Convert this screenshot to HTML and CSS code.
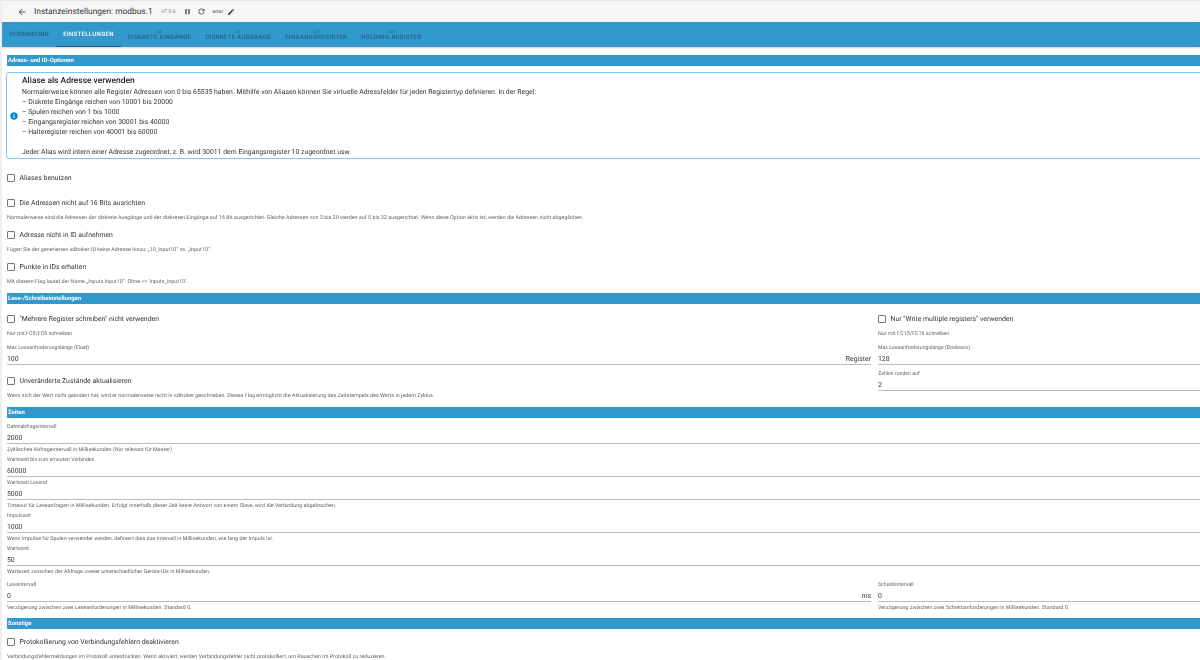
FILE: index.html
```html
<!DOCTYPE html>
<html lang="de">
<head>
<meta charset="utf-8">
<title>Instanzeinstellungen: modbus.1</title>
<link rel="stylesheet" href="styles.css">
</head>
<body>
<div class="page">
  <header class="topbar">
    <svg class="ico back" viewBox="0 0 24 24"><path d="M20 11H7.83l5.59-5.59L12 4l-8 8 8 8 1.41-1.41L7.83 13H20z"/></svg>
    <span class="title">Instanzeinstellungen: modbus.1</span>
    <span class="version">v7.0.6</span>
    <svg class="ico pause" viewBox="0 0 24 24"><path d="M6 19h4V5H6zm8-14v14h4V5z"/></svg>
    <svg class="ico reload" viewBox="0 0 24 24"><path d="M17.65 6.35A7.96 7.96 0 0 0 12 4a8 8 0 1 0 7.73 10h-2.08A6 6 0 1 1 12 6c1.66 0 3.14.69 4.22 1.78L13 11h7V4z"/></svg>
    <span class="status">error</span>
    <svg class="ico pencil" viewBox="0 0 24 24"><path d="M3 17.25V21h3.75L17.81 9.94l-3.75-3.75zM20.71 7.04a1 1 0 0 0 0-1.41l-2.34-2.34a1 1 0 0 0-1.41 0l-1.83 1.83 3.75 3.75z"/></svg>
  </header>
  <nav class="tabs">
    <div class="tab"><span class="tab-label">Verbindung</span></div>
    <div class="tab active"><span class="tab-label">Einstellungen</span></div>
    <div class="tab"><span class="tab-count">03</span><span class="tab-label">Diskrete Eingänge</span></div>
    <div class="tab"><span class="tab-count">01</span><span class="tab-label">Diskrete Ausgänge</span></div>
    <div class="tab"><span class="tab-count">123</span><span class="tab-label">Eingangsregister</span></div>
    <div class="tab"><span class="tab-count">123</span><span class="tab-label">Holding-Register</span></div>
  </nav>
  <main class="content">
    <h2 class="bar first">Adress- und ID-Optionen</h2>
    <section class="info">
      <svg class="info-icon" viewBox="0 0 24 24"><path d="M12 1a11 11 0 1 0 0 22 11 11 0 0 0 0-22zm1.6 17h-3.2v-7.5h3.2zm0-9.5h-3.2V5.6h3.2z"/></svg>
      <div class="info-text">
        <h3 class="info-title">Aliase als Adresse verwenden</h3>
        <p>Normalerweise können alle Register Adressen von 0 bis 65535 haben. Mithilfe von Aliasen können Sie virtuelle Adressfelder für jeden Registertyp definieren. In der Regel:</p>
        <p>– Diskrete Eingänge reichen von 10001 bis 20000</p>
        <p>– Spulen reichen von 1 bis 1000</p>
        <p>– Eingangsregister reichen von 30001 bis 40000</p>
        <p>– Halteregister reichen von 40001 bis 60000</p>
        <p>&nbsp;</p>
        <p>Jeder Alias wird intern einer Adresse zugeordnet, z. B. wird 30011 dem Eingangsregister 10 zugeordnet usw.</p>
      </div>
    </section>

    <label class="check solo"><span class="box"></span>Aliases benutzen</label>
    <label class="check"><span class="box"></span>Die Adressen nicht auf 16 Bits ausrichten</label>
    <p class="help gap">Normalerweise sind die Adressen der diskrete Ausgänge und der diskreten Eingänge auf 16 Bit ausgerichtet. Gleiche Adressen von 3 bis 20 werden auf 0 bis 32 ausgerichtet. Wenn diese Option aktiv ist, werden die Adressen nicht abgeglichen.</p>
    <label class="check"><span class="box"></span>Adresse nicht in ID aufnehmen</label>
    <p class="help gap">Fügen Sie der generierten ioBroker-ID keine Adresse hinzu: „10_Input10“ vs. „Input10“.</p>
    <label class="check"><span class="box"></span>Punkte in IDs erhalten</label>
    <p class="help">Mit diesem Flag lautet der Name „Inputs.Input10“. Ohne =&gt; 'Inputs_Input10'.</p>

    <h2 class="bar">Lese-/Schreibeinstellungen</h2>
    <div class="cols">
      <div class="col">
        <label class="check"><span class="box"></span>"Mehrere Register schreiben" nicht verwenden</label>
        <p class="help">Nur mit FC5/FC6 schreiben</p>
        <div class="field spaced"><span class="field-label">Max Leseanforderungslänge (Float)</span><div class="field-row"><span>100</span><span>Register</span></div></div>
        <label class="check after-field"><span class="box"></span>Unveränderte Zustände aktualisieren</label>
        <p class="help">Wenn sich der Wert nicht geändert hat, wird er normalerweise nicht in ioBroker geschrieben. Dieses Flag ermöglicht die Aktualisierung des Zeitstempels des Werts in jedem Zyklus.</p>
      </div>
      <div class="col">
        <label class="check"><span class="box"></span>Nur "Write multiple registers" verwenden</label>
        <p class="help">Nur mit FC15/FC16 schreiben</p>
        <div class="field spaced"><span class="field-label">Max Leseanforderungslänge (Booleans)</span><div class="field-row"><span>128</span></div></div>
        <div class="field stacked"><span class="field-label">Zahlen runden auf</span><div class="field-row"><span>2</span></div></div>
      </div>
    </div>

    <h2 class="bar times">Zeiten</h2>
    <div class="field"><span class="field-label">Datenabfrageintervall</span><div class="field-row"><span>2000</span></div></div>
    <p class="help">Zyklisches Abfrageintervall in Millisekunden (Nur relevant für Master)</p>
    <div class="field"><span class="field-label">Wartezeit bis zum erneuten Verbinden</span><div class="field-row"><span>60000</span></div></div>
    <div class="field"><span class="field-label">Wartezeit Lesend</span><div class="field-row"><span>5000</span></div></div>
    <p class="help">Timeout für Leseanfragen in Millisekunden. Erfolgt innerhalb dieser Zeit keine Antwort von einem Slave, wird die Verbindung abgebrochen.</p>
    <div class="field"><span class="field-label">Impulszeit</span><div class="field-row"><span>1000</span></div></div>
    <p class="help">Wenn Impulse für Spulen verwendet werden, definiert dies das Intervall in Millisekunden, wie lang der Impuls ist.</p>
    <div class="field"><span class="field-label">Wartezeit</span><div class="field-row"><span>50</span></div></div>
    <p class="help">Wartezeit zwischen der Abfrage zweier unterschiedlicher Geräte-IDs in Millisekunden.</p>
    <div class="cols intervals">
      <div class="col">
        <div class="field"><span class="field-label">Leseintervall</span><div class="field-row"><span>0</span><span>ms</span></div></div>
        <p class="help">Verzögerung zwischen zwei Leseanforderungen in Millisekunden. Standard 0.</p>
      </div>
      <div class="col">
        <div class="field"><span class="field-label">Schreibintervall</span><div class="field-row"><span>0</span></div></div>
        <p class="help">Verzögerung zwischen zwei Schreibanforderungen in Millisekunden. Standard 0.</p>
      </div>
    </div>

    <h2 class="bar other">Sonstige</h2>
    <label class="check last"><span class="box"></span>Protokollierung von Verbindungsfehlern deaktivieren</label>
    <p class="help">Verbindungsfehlermeldungen im Protokoll unterdrücken. Wenn aktiviert, werden Verbindungsfehler nicht protokolliert, um Rauschen im Protokoll zu reduzieren.</p>
  </main>
</div>
</body>
</html>
```
FILE: styles.css
```css
* { box-sizing: border-box; }
html, body { margin: 0; height: 100%; overflow: hidden; background: #fff; }
body { font-family: Roboto, "Liberation Sans", sans-serif; color: #333; text-rendering: geometricPrecision; }
h2, h3, p { margin: 0; font-weight: inherit; }

.page { width: 1200px; height: 660px; overflow: hidden; border-left: 2px solid #eee; border-top: 1px solid #e4e4e4; filter: blur(.35px); }

.topbar { height: 21px; display: flex; align-items: center; background: #f6f6f6; }
.ico { fill: #555; flex: none; }
.back { width: 10px; height: 10px; margin-left: 15px; }
.title { margin-left: 7px; font-size: 8.35px; letter-spacing: .02px; color: #333; white-space: nowrap; }
.version { margin-left: 9px; font-size: 5.2px; color: #777; }
.pause { width: 9px; height: 9px; margin-left: 7px; }
.reload { width: 9px; height: 9px; margin-left: 5px; }
.status { margin-left: 7px; font-size: 5px; color: #333; }
.pencil { width: 8px; height: 8px; margin-left: 4px; fill: #444; }

.tabs { height: 25px; display: flex; background: #3399cc; box-shadow: 0 1px 2px rgba(0,0,0,.2); }
.tab { display: flex; flex-direction: column; align-items: center; justify-content: center; padding: 0 7px; height: 25px; color: #1e5f85; }
.tab-label { font-size: 6px; letter-spacing: .33px; text-transform: uppercase; white-space: nowrap; font-weight: 500; line-height: 7px; }
.tab-count { font-size: 4px; line-height: 5px; margin-top: 1px; }
.tab.active { color: #fff; border-bottom: 1px solid #1e5f85; }

.content { padding-left: 5px; }
.bar { height: 11px; line-height: 11px; margin-top: 7px; padding: 1px 0 0 1px; background: #3399cc; color: #fff; font-size: 5.9px; font-weight: 700; white-space: nowrap; }
.bar.first { margin-top: 8px; }
.bar.times { margin-top: 7px; }
.bar.other { margin-top: 6px; }

.info { display: flex; align-items: center; height: 87px; margin: 6px 0 0 -1px; width: 1210px; border: 1px solid #7fc8ec; border-radius: 3px; }
.info-icon { width: 8px; height: 8px; margin-left: 3px; fill: #0288d1; flex: none; }
.info-text { margin-left: 4px; padding-top: 2px; font-size: 6.88px; line-height: 10px; color: #333; white-space: nowrap; }
.info-title { font-size: 8.45px; font-weight: 500; line-height: 12px; color: #222; margin-top: -1px; }

.check { display: flex; align-items: center; height: 14px; padding-top: 1px; font-size: 6.88px; color: #333; white-space: nowrap; }
.check.solo { margin: 11px 0; }
.check.after-field { margin-top: 8px; }
.check.last { margin-top: 5px; }
.box { width: 8px; height: 8px; margin: 0 4.5px 0 0; border: 1px solid #777; border-radius: 1px; flex: none; }
.help { height: 10px; line-height: 10px; margin-top: 3px; padding-top: 1px; font-size: 5.4px; color: #666; white-space: nowrap; }
.help.gap { margin-bottom: 5px; }

.cols { display: grid; grid-template-columns: 864px 322px; column-gap: 7px; }
.bar + .cols { margin-top: 7px; }
.cols.intervals { margin-top: 3px; }

.field { display: block; height: 23px; border-bottom: 1px solid #bbb; }
.bar.times + .field { margin-top: 3px; }
.field-label { display: block; height: 9px; padding-top: 3px; font-size: 5.2px; line-height: 7px; color: #666; white-space: nowrap; }
.field-row { display: flex; justify-content: space-between; height: 13px; line-height: 16px; font-size: 6.88px; color: #333; }
.field + .help { margin-top: 0; }
.field.spaced { margin-top: 4px; }
.field.stacked { margin-top: 3px; }
```
